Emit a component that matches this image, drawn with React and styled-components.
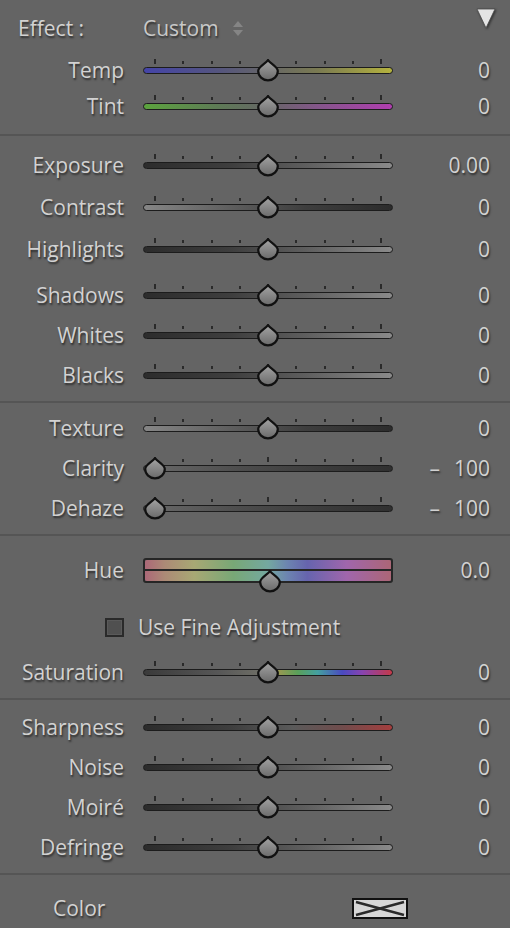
import React from "react";
import styled, { createGlobalStyle } from "styled-components";

const GRAD = {
  temp: "linear-gradient(90deg, #4444a8 0%, #55557e 30%, #666666 50%, #7a7a52 70%, #b4b23e 100%)",
  tint: "linear-gradient(90deg, #5ca43e 0%, #5e7a56 30%, #666666 50%, #84568a 70%, #b03eb0 100%)",
  up: "linear-gradient(90deg, #2c2c2c 0%, #3e3e3e 35%, #5e5e5e 65%, #8a8a8a 100%)",
  down: "linear-gradient(90deg, #868686 0%, #5e5e5e 35%, #3e3e3e 65%, #2c2c2c 100%)",
  clarity: "linear-gradient(90deg, #6a6a6a 0%, #4c4c4c 40%, #3a3a3a 75%, #303030 100%)",
  sat: "linear-gradient(90deg, #3a3a3a 0%, #575757 30%, #6e6e66 47%, #9a9852 54%, #5aa05a 62%, #44a0a0 70%, #4a4ac0 80%, #8844b0 88%, #c43a4a 100%)",
  sharp: "linear-gradient(90deg, #2c2c2c 0%, #3e3e3e 35%, #5a5a5a 60%, #704c4c 80%, #a43e3e 100%)",
};

const HUE =
  "linear-gradient(90deg, #ac6878 0%, #ac8a76 8%, #a8a874 20%, #78a876 36%, #74a8a0 50%, #6c84b0 58%, #6664ae 66%, #a066ac 82%, #ac6676 100%)";

const rows = [
  {
    pt: 10,
    pb: 10,
    items: [
      { type: "effect" },
      { label: "Temp", value: "0", v: 0, bg: GRAD.temp, mt: 6, h: 36 },
      { label: "Tint", value: "0", v: 0, bg: GRAD.tint, h: 36 },
    ],
  },
  {
    pt: 9,
    pb: 6,
    items: [
      { label: "Exposure", value: "0.00", v: 0, bg: GRAD.up },
      { label: "Contrast", value: "0", v: 0, bg: GRAD.down, mt: 2 },
      { label: "Highlights", value: "0", v: 0, bg: GRAD.up, mt: 2 },
      { label: "Shadows", value: "0", v: 0, bg: GRAD.up, mt: 6 },
      { label: "Whites", value: "0", v: 0, bg: GRAD.up },
      { label: "Blacks", value: "0", v: 0, bg: GRAD.up },
    ],
  },
  {
    pt: 5,
    pb: 6,
    items: [
      { label: "Texture", value: "0", v: 0, bg: GRAD.down },
      { label: "Clarity", value: "–\u2002\u2009100", v: -100, bg: GRAD.clarity },
      { label: "Dehaze", value: "–\u2002\u2009100", v: -100, bg: GRAD.clarity },
    ],
  },
  {
    pt: 14,
    pb: 6,
    items: [
      { type: "hue" },
      { type: "fine", mt: 17 },
      { label: "Saturation", value: "0", v: 0, bg: GRAD.sat, mt: 5 },
    ],
  },
  {
    pt: 7,
    pb: 6,
    items: [
      { label: "Sharpness", value: "0", v: 0, bg: GRAD.sharp },
      { label: "Noise", value: "0", v: 0, bg: GRAD.up },
      { label: "Moiré", value: "0", v: 0, bg: GRAD.up },
      { label: "Defringe", value: "0", v: 0, bg: GRAD.up },
    ],
  },
];

// teardrop slider handle, tip at y=1, widest at y=12
function Thumb({ left, top }) {
  return (
    <ThumbSvg width="24" height="24" viewBox="0 0 24 24" style={{ left, top }}>
      <defs>
        <linearGradient id="thumbFill" x1="0" y1="0" x2="0" y2="1">
          <stop offset="0" stopColor="#a4a4a4" />
          <stop offset="1" stopColor="#6a6a6a" />
        </linearGradient>
      </defs>
      <path
        d="M12 1.2 C14.6 4.6 21.8 7.6 21.8 12 A9.8 9.4 0 0 1 2.2 12 C2.2 7.6 9.4 4.6 12 1.2 Z"
        fill="url(#thumbFill)"
        stroke="#111"
        strokeWidth="2.2"
        strokeLinejoin="round"
      />
    </ThumbSvg>
  );
}

function Slider({ v, bg }) {
  const frac = (v + 100) / 200;
  return (
    <SliderBox>
      <Ticks>
        {Array.from({ length: 9 }).map((_, i) => (
          <Tick key={i} $tall={i === 0 || i === 4 || i === 8} />
        ))}
      </Ticks>
      <Track $bg={bg} />
      <Thumb left={12 + frac * 226 - 12} top={0} />
    </SliderBox>
  );
}

function SliderRow({ label, value, v, bg, mt, h }) {
  return (
    <Row $mt={mt} $h={h}>
      <Label>{label}</Label>
      <Slider v={v} bg={bg} />
      <Value>{value}</Value>
    </Row>
  );
}

function EffectRow() {
  return (
    <EffectLine>
      <EffectLabel>Effect :</EffectLabel>
      <Preset>Custom</Preset>
      <svg width="12" height="17" viewBox="0 0 12 17">
        <polygon points="1,7 6,1 11,7" fill="#858585" />
        <polygon points="1,10 6,16 11,10" fill="#858585" />
      </svg>
      <Collapse width="20" height="22" viewBox="0 0 20 22">
        <polygon points="1,1 19,1 10,20" fill="#e4e4e4" stroke="#4a4a4a" strokeWidth="0.8" />
      </Collapse>
    </EffectLine>
  );
}

function HueRow() {
  return (
    <Row>
      <Label>Hue</Label>
      <HueBar>
        <HueHalf />
        <HueHalf $bottom />
        <Thumb left={12 + 0.5 * 226 - 12} top={10} />
      </HueBar>
      <Value>0.0</Value>
    </Row>
  );
}

function FineRow({ mt }) {
  return (
    <FineLine $mt={mt}>
      <Check />
      <FineText>Use Fine Adjustment</FineText>
    </FineLine>
  );
}

export default function App() {
  return (
    <>
      <GlobalStyle />
      <Panel>
        {rows.map((section, si) => (
          <React.Fragment key={si}>
            <Section $pt={section.pt} $pb={section.pb}>
              {section.items.map((it, i) => {
                if (it.type === "effect") return <EffectRow key={i} />;
                if (it.type === "hue") return <HueRow key={i} />;
                if (it.type === "fine") return <FineRow key={i} mt={it.mt} />;
                return <SliderRow key={i} {...it} />;
              })}
            </Section>
            <Divider />
          </React.Fragment>
        ))}
        <ColorRow>
          <Label $left>Color</Label>
          <Swatch viewBox="0 0 56 21" width="56" height="21">
            <rect x="1" y="1" width="54" height="19" fill="#d6d6d6" stroke="#111" strokeWidth="2" />
            <path d="M4 4 L52 17 M4 17 L52 4" stroke="#2a2a2a" strokeWidth="2.4" />
          </Swatch>
        </ColorRow>
      </Panel>
    </>
  );
}

const GlobalStyle = createGlobalStyle`
  body {
    margin: 0;
    background: #646464;
  }
`;

const Panel = styled.div`
  width: 510px;
  height: 928px;
  background: #646464;
  font-family: "Open Sans", "Liberation Sans", sans-serif;
  font-size: 21px;
  color: #d2d2d2;
  text-shadow: 1px 2px 2px rgba(0, 0, 0, 0.55);
  overflow: hidden;
`;

const Section = styled.div`
  display: flex;
  flex-direction: column;
  padding: ${(p) => p.$pt}px 0 ${(p) => p.$pb}px;
`;

const Divider = styled.div`
  height: 2px;
  background: #555555;
`;

const Row = styled.div`
  display: grid;
  grid-template-columns: 124px 250px 1fr;
  column-gap: 19px;
  align-items: center;
  height: ${(p) => p.$h || 40}px;
  margin-top: ${(p) => p.$mt || 0}px;
  padding-right: 20px;
`;

const Label = styled.div`
  text-align: ${(p) => (p.$left ? "left" : "right")};
  line-height: 1;
  white-space: nowrap;
`;

const Value = styled.div`
  text-align: right;
  line-height: 1;
  white-space: nowrap;
`;

const SliderBox = styled.div`
  position: relative;
  width: 250px;
  display: flex;
  flex-direction: column;
  padding-bottom: 8px;
`;

const Ticks = styled.div`
  height: 5px;
  display: flex;
  justify-content: space-between;
  align-items: flex-end;
  padding: 0 11px;
  margin-bottom: 3px;
`;

const Tick = styled.div`
  width: 2px;
  height: ${(p) => (p.$tall ? 5 : 3)}px;
  background: #2a2a2a;
`;

const Track = styled.div`
  box-sizing: border-box;
  height: 7px;
  border: 1.5px solid #1c1c1c;
  border-radius: 4px;
  background: ${(p) => p.$bg};
`;

const ThumbSvg = styled.svg`
  position: absolute;
  display: block;
`;

const EffectLine = styled.div`
  display: flex;
  align-items: center;
  height: 36px;
  padding-left: 18px;
  padding-right: 14px;
`;

const EffectLabel = styled.div`
  width: 125px;
  line-height: 1;
`;

const Preset = styled.div`
  line-height: 1;
  color: #c8c8c8;
  margin-right: 13px;
`;

const Collapse = styled.svg`
  margin-left: auto;
  align-self: flex-start;
  margin-top: -2px;
  filter: drop-shadow(1px 1px 1px rgba(0, 0, 0, 0.5));
`;

const HueBar = styled.div`
  position: relative;
  box-sizing: border-box;
  width: 250px;
  height: 25px;
  border: 2px solid #262626;
  border-radius: 3px;
  display: flex;
  flex-direction: column;
`;

const HueHalf = styled.div`
  flex: 1;
  background: ${HUE};
  border-top: ${(p) => (p.$bottom ? "2px solid #262626" : "none")};
  border-radius: ${(p) => (p.$bottom ? "0 0 2px 2px" : "2px 2px 0 0")};
`;

const FineLine = styled.div`
  display: flex;
  align-items: center;
  height: 40px;
  margin-top: ${(p) => p.$mt || 0}px;
  padding-left: 105px;
  gap: 14px;
`;

const Check = styled.div`
  box-sizing: border-box;
  width: 19px;
  height: 19px;
  background: #505050;
  border: 2px solid #2a2a2a;
  box-shadow: inset 0 0 0 1px #5a5a5a;
`;

const FineText = styled.div`
  line-height: 1;
`;

const ColorRow = styled.div`
  display: grid;
  grid-template-columns: 299px 56px;
  align-items: center;
  height: 40px;
  margin-top: 13px;
  padding-left: 53px;
`;

const Swatch = styled.svg`
  display: block;
`;
